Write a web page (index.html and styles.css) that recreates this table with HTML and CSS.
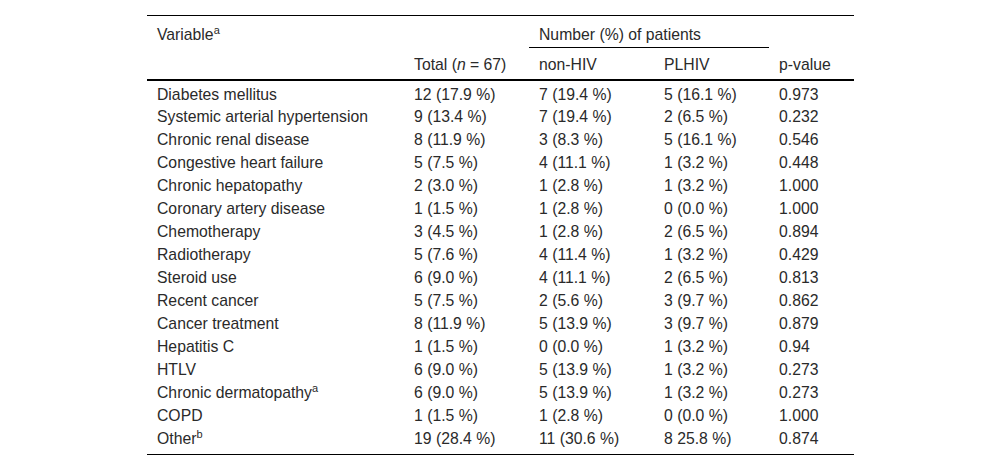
FILE: index.html
```html
<!DOCTYPE html>
<html lang="en">
<head>
<meta charset="utf-8">
<title>Comorbidities</title>
<link rel="stylesheet" href="styles.css">
</head>
<body>
<table class="data-table">
  <colgroup>
    <col class="c-var">
    <col class="c-total">
    <col class="c-non">
    <col class="c-pl">
    <col class="c-p">
  </colgroup>
  <thead>
    <tr class="head-1">
      <th>Variable<sup>a</sup></th>
      <th></th>
      <th colspan="2" class="group">Number (%) of patients</th>
      <th></th>
    </tr>
    <tr class="head-2">
      <th></th>
      <th>Total (<i>n</i> = 67)</th>
      <th>non-HIV</th>
      <th>PLHIV</th>
      <th>p-value</th>
    </tr>
  </thead>
  <tbody>
    <tr><td>Diabetes mellitus</td><td>12 (17.9 %)</td><td>7 (19.4 %)</td><td>5 (16.1 %)</td><td>0.973</td></tr>
    <tr><td>Systemic arterial hypertension</td><td>9 (13.4 %)</td><td>7 (19.4 %)</td><td>2 (6.5 %)</td><td>0.232</td></tr>
    <tr><td>Chronic renal disease</td><td>8 (11.9 %)</td><td>3 (8.3 %)</td><td>5 (16.1 %)</td><td>0.546</td></tr>
    <tr><td>Congestive heart failure</td><td>5 (7.5 %)</td><td>4 (11.1 %)</td><td>1 (3.2 %)</td><td>0.448</td></tr>
    <tr><td>Chronic hepatopathy</td><td>2 (3.0 %)</td><td>1 (2.8 %)</td><td>1 (3.2 %)</td><td>1.000</td></tr>
    <tr><td>Coronary artery disease</td><td>1 (1.5 %)</td><td>1 (2.8 %)</td><td>0 (0.0 %)</td><td>1.000</td></tr>
    <tr><td>Chemotherapy</td><td>3 (4.5 %)</td><td>1 (2.8 %)</td><td>2 (6.5 %)</td><td>0.894</td></tr>
    <tr><td>Radiotherapy</td><td>5 (7.6 %)</td><td>4 (11.4 %)</td><td>1 (3.2 %)</td><td>0.429</td></tr>
    <tr><td>Steroid use</td><td>6 (9.0 %)</td><td>4 (11.1 %)</td><td>2 (6.5 %)</td><td>0.813</td></tr>
    <tr><td>Recent cancer</td><td>5 (7.5 %)</td><td>2 (5.6 %)</td><td>3 (9.7 %)</td><td>0.862</td></tr>
    <tr><td>Cancer treatment</td><td>8 (11.9 %)</td><td>5 (13.9 %)</td><td>3 (9.7 %)</td><td>0.879</td></tr>
    <tr><td>Hepatitis C</td><td>1 (1.5 %)</td><td>0 (0.0 %)</td><td>1 (3.2 %)</td><td>0.94</td></tr>
    <tr><td>HTLV</td><td>6 (9.0 %)</td><td>5 (13.9 %)</td><td>1 (3.2 %)</td><td>0.273</td></tr>
    <tr><td>Chronic dermatopathy<sup>a</sup></td><td>6 (9.0 %)</td><td>5 (13.9 %)</td><td>1 (3.2 %)</td><td>0.273</td></tr>
    <tr><td>COPD</td><td>1 (1.5 %)</td><td>1 (2.8 %)</td><td>0 (0.0 %)</td><td>1.000</td></tr>
    <tr><td>Other<sup>b</sup></td><td>19 (28.4 %)</td><td>11 (30.6 %)</td><td>8 25.8 %)</td><td>0.874</td></tr>
  </tbody>
</table>
</body>
</html>
```

FILE: styles.css
```css
html, body {
  margin: 0;
  padding: 0;
  background: #ffffff;
}

body {
  font-family: "Liberation Sans", Arial, sans-serif;
  font-size: 15.75px;
  color: #2a2a2a;
}

.data-table {
  margin: 15px 0 0 147px;
  width: 707px;
  table-layout: fixed;
  border-collapse: separate;
  border-spacing: 0;
  border-top: 1px solid #000;
  border-bottom: 1px solid #000;
}

.c-var { width: 257px; }
.c-total { width: 125px; }
.c-non { width: 125px; }
.c-pl { width: 115px; }
.c-p { width: 85px; }

.data-table th,
.data-table td {
  text-align: left;
  font-weight: normal;
  line-height: 18px;
  padding: 2.5px 10px;
  white-space: nowrap;
  vertical-align: top;
}

.data-table td {
  line-height: 17.95px;
}

.head-1 th {
  padding-top: 9.5px;
  padding-bottom: 3.5px;
}

.head-1 th.group {
  border-bottom: 1px solid #000;
}

.head-2 th {
  padding-top: 8px;
  padding-bottom: 5px;
  border-bottom: 2px solid #000;
}

tbody tr:first-child td {
  padding-top: 4.5px;
}

tbody tr:last-child td {
  padding-bottom: 6.5px;
}

sup {
  font-size: 11px;
  line-height: 0;
  vertical-align: 6px;
}
```
